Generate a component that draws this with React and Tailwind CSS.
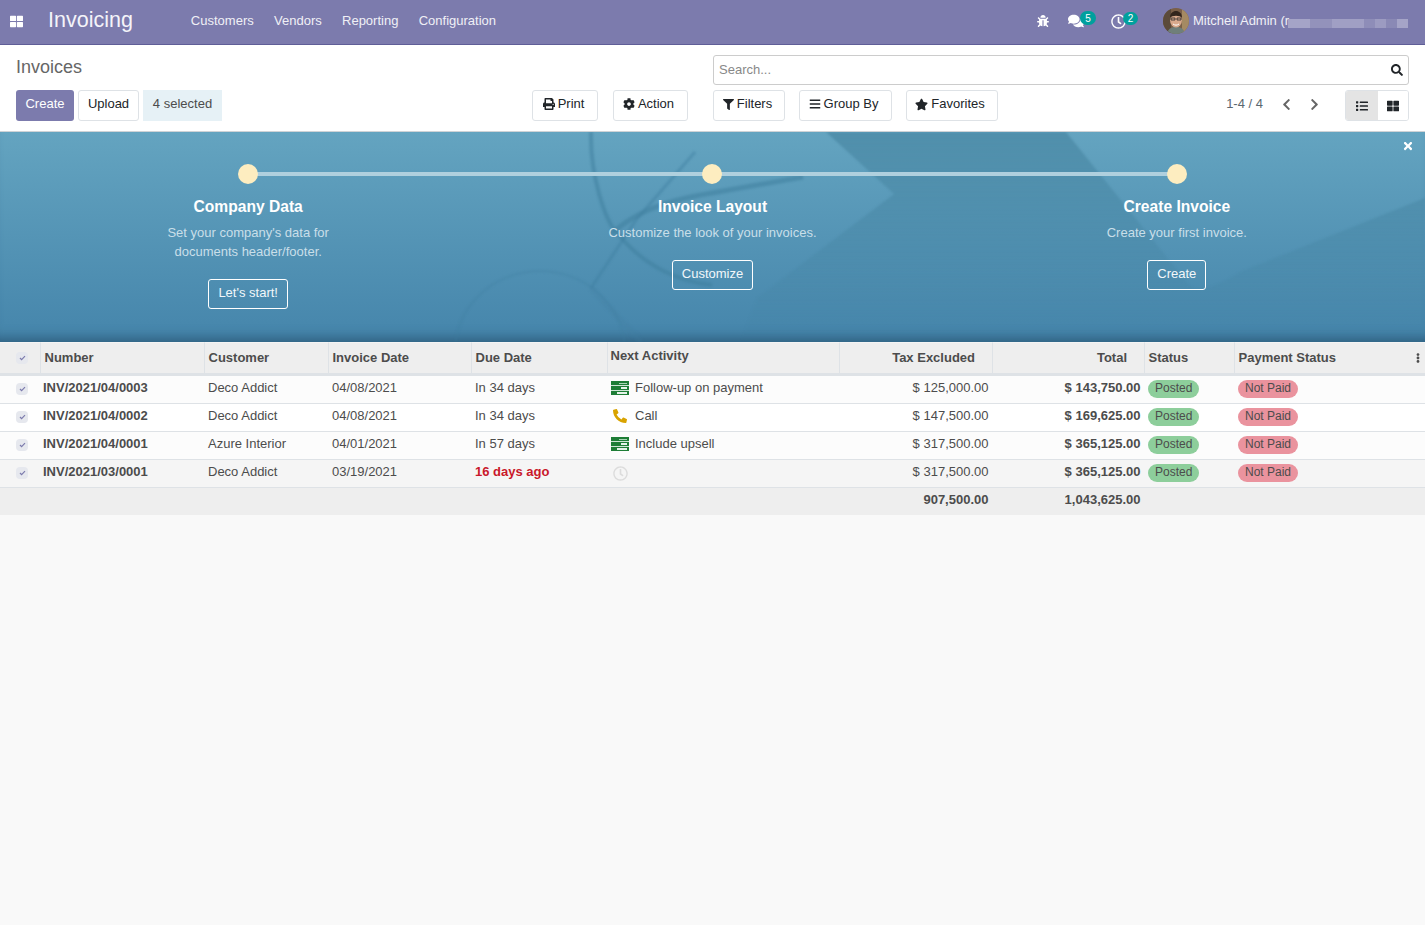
import {
  FaBars,
  FaBug,
  FaChevronLeft,
  FaChevronRight,
  FaCog,
  FaComments,
  FaEllipsisV,
  FaFilter,
  FaList,
  FaPhoneAlt,
  FaPrint,
  FaRegClock,
  FaSearch,
  FaStar,
  FaThLarge,
  FaTimes,
} from "react-icons/fa";

const invoices = [
  { number: "INV/2021/04/0003", customer: "Deco Addict", date: "04/08/2021", due: "In 34 days", activity: "Follow-up on payment", kind: "todo", tax: "$ 125,000.00", total: "$ 143,750.00", bg: "bg-[#fcfcfc]" },
  { number: "INV/2021/04/0002", customer: "Deco Addict", date: "04/08/2021", due: "In 34 days", activity: "Call", kind: "call", tax: "$ 147,500.00", total: "$ 169,625.00", bg: "bg-white" },
  { number: "INV/2021/04/0001", customer: "Azure Interior", date: "04/01/2021", due: "In 57 days", activity: "Include upsell", kind: "todo", tax: "$ 317,500.00", total: "$ 365,125.00", bg: "bg-[#fcfcfc]" },
  { number: "INV/2021/03/0001", customer: "Deco Addict", date: "03/19/2021", due: "16 days ago", late: true, activity: "", kind: "none", tax: "$ 317,500.00", total: "$ 365,125.00", bg: "bg-[#f5f5f5]" },
];

const steps = [
  { title: "Company Data", text: ["Set your company's data for", "documents header/footer."], button: "Let's start!" },
  { title: "Invoice Layout", text: ["Customize the look of your invoices."], button: "Customize" },
  { title: "Create Invoice", text: ["Create your first invoice."], button: "Create" },
];

const Check = () => (
  <span className="inline-flex items-center justify-center w-3 h-3 rounded-sm bg-[#e6e8ee] align-middle">
    <svg width="7" height="6" viewBox="0 0 7 6">
      <path d="M1 3l1.6 1.6L6 1.2" fill="none" stroke="#7c7bad" strokeWidth="1.2" />
    </svg>
  </span>
);

const TodoIcon = () => (
  <svg width="18" height="14" viewBox="0 0 18 14" className="shrink-0">
    <rect width="18" height="14" fill="#1e7d36" />
    <rect y="4" width="18" height="1" fill="#cfe6d6" />
    <rect y="9" width="18" height="1" fill="#cfe6d6" />
    <rect x="8" y="2" width="8" height="1" fill="#a9d4b5" />
    <rect x="10" y="6" width="6" height="2" fill="#e6f3ea" />
    <rect x="6" y="11" width="10" height="2" fill="#e6f3ea" />
  </svg>
);

const Avatar = () => (
  <svg width="26" height="26" viewBox="0 0 26 26" className="rounded-full">
    <rect width="26" height="26" fill="#7a5f48" />
    <rect x="0" width="8" height="26" fill="#5b4a3a" />
    <rect x="19" width="7" height="26" fill="#a58a63" />
    <path d="M4 26c1-6 5-7 9-7s8 1 9 7z" fill="#6f7f7a" />
    <ellipse cx="13" cy="12" rx="6" ry="7.5" fill="#d8a98c" />
    <path d="M7 10c0-5 3-7 6-7s6 2 6 7c-2-3-10-3-12 0z" fill="#33261d" />
    <path d="M8 10h4v2H8zM14 10h4v2h-4z" fill="none" stroke="#2a2a2a" strokeWidth="0.8" />
    <path d="M10 16c2 1.500 4 1.500 6 0" fill="none" stroke="#fff" strokeWidth="1" />
  </svg>
);

const Button = ({ children, className = "" }) => (
  <button className={`flex items-center h-[31px] pb-[3px] rounded-[3px] border border-[#dee2e6] bg-white text-[#212529] ${className}`}>
    {children}
  </button>
);

const Badge = ({ color, children }) => (
  <span className={`inline-flex items-center align-middle h-[18px] pb-[2px] px-[7px] rounded-full text-[12px] text-[#4c4c4c] ${color}`}>
    {children}
  </span>
);

const App = () => {
  return (
    <div className="min-h-screen bg-[#f9f9f9] text-[13px] text-[#4c4c4c] font-['Liberation_Sans',Arial,sans-serif]">
      {/* Top bar */}
      <nav className="flex items-center h-[45px] pb-[2px] bg-[#7c7bad] border-b border-[#5f5e97] text-white">
        <FaThLarge size={13} className="ml-[10px] text-white" />
        <span className="ml-[25px] text-[21.500px] leading-none text-[#f4f4f9]">Invoicing</span>
        <div className="flex ml-[58px] gap-[20.300px] text-[#f0f0f6]">
          <span>Customers</span>
          <span>Vendors</span>
          <span>Reporting</span>
          <span>Configuration</span>
        </div>
        <div className="flex items-center ml-auto pr-[17px]">
          <FaBug size={12} />
          <div className="flex items-center ml-[19px]">
            <FaComments size={16} />
            <span className="flex items-center justify-center w-[16px] h-[14px] -ml-[4px] -mt-[6px] rounded-full bg-[#00a09d] text-[10px]">5</span>
          </div>
          <div className="flex items-center ml-[15px]">
            <FaRegClock size={15} />
            <span className="flex items-center justify-center w-[15px] h-[13px] -ml-[3px] -mt-[6px] rounded-full bg-[#00a09d] text-[10px]">2</span>
          </div>
          <div className="ml-[25px] flex"><Avatar /></div>
          <span className="ml-[4px] w-[96px] whitespace-nowrap text-[#f0f0f6]">Mitchell Admin (r</span>
          <div className="flex h-[9px] w-[120px] mt-[4px] -ml-[1px]">
            <span className="w-[22px] bg-[#a5a4c7]" />
            <span className="w-[22px] bg-[#9392bb]" />
            <span className="w-[32px] bg-[#a09fc4]" />
            <span className="w-[11px] bg-[#8e8db8]" />
            <span className="w-[11px] bg-[#9c9bc1]" />
            <span className="w-[11px] bg-[#8a89b5]" />
            <span className="w-[11px] bg-[#a5a4c7]" />
          </div>
        </div>
      </nav>

      {/* Control panel */}
      <div className="grid grid-cols-2 h-[87px] bg-white border-b border-[#cfd3d6]">
        <div className="pl-4 pr-[25px] flex flex-col">
          <div className="h-[45px] pt-[9px] text-[18px] text-[#666666] leading-[26px]">Invoices</div>
          <div className="flex">
            <button className="h-[31px] w-[58px] pb-[3px] rounded-[3px] bg-[#7c7bad] text-white">Create</button>
            <Button className="ml-[4px] w-[61px] justify-center">Upload</Button>
            <span className="flex items-center ml-[4px] h-[31px] pb-[3px] w-[79px] justify-center bg-[#e6f1f6]">4 selected</span>
            <Button className="ml-auto w-[66px] pr-[2px] justify-center gap-[3px]"><FaPrint size={12} />Print</Button>
            <Button className="ml-[15px] w-[75px] pr-[3px] justify-center gap-[3px]"><FaCog size={12} />Action</Button>
          </div>
        </div>
        <div className="pl-[0.500px] pr-4 flex flex-col">
          <div className="flex items-center h-[30px] mt-[10px] px-[5px] border border-[#cccccc] rounded-[3px]">
            <span className="text-[#888888] text-[13px]">Search...</span>
            <FaSearch size={12} className="ml-auto text-[#212529]" />
          </div>
          <div className="flex mt-[5px]">
            <Button className="w-[72px] pr-[3px] justify-center gap-[3px]"><FaFilter size={11} />Filters</Button>
            <Button className="ml-[14px] w-[93px] pr-[4px] justify-center gap-[3px]"><FaBars size={12} />Group By</Button>
            <Button className="ml-[14px] w-[92px] pr-[4px] justify-center gap-[3px]"><FaStar size={13} />Favorites</Button>
            <span className="flex items-center h-[31px] pb-[3px] ml-auto text-[#5b6770]">1-4 / 4</span>
            <FaChevronLeft size={13} className="ml-[17px] mt-[8px] text-[#666666]" />
            <FaChevronRight size={13} className="ml-[15px] mt-[8px] text-[#666666]" />
            <div className="flex ml-[24px] h-[31px] border border-[#dee2e6] rounded-[3px] overflow-hidden">
              <span className="flex items-center justify-center w-[32px] bg-[#e4e4e4] text-[#212529]"><FaList size={12} /></span>
              <span className="flex items-center justify-center w-[30px] bg-white text-[#212529]"><FaThLarge size={12} /></span>
            </div>
          </div>
        </div>
      </div>

      {/* Onboarding banner */}
      <section className="relative h-[210px] px-4 overflow-hidden bg-gradient-to-b from-[#64a4c0] to-[#4585ab] shadow-[inset_0_-14px_12px_-10px_#2f5f7f]">
        <svg className="absolute inset-0 pointer-events-none blur-[1px]" width="1425" height="210" viewBox="0 0 1425 210">
          <defs>
            <linearGradient id="band" x1="0" y1="0" x2="0" y2="1">
              <stop offset="0" stopColor="#417f9b" stopOpacity="0.55" />
              <stop offset="1" stopColor="#417f9b" stopOpacity="0" />
            </linearGradient>
          </defs>
          <path d="M826 0L894 62L757 166L740 210H1425V66L1240 140Q1200 165 1189 153L1066 0z" fill="url(#band)" />
          <path d="M591 0C590 43 605 90 618 102C645 135 680 150 712 153" fill="none" stroke="#3f7f9f" strokeWidth="4" opacity="0.55" />
          <path d="M611 102C630 85 655 70 712 61L803 45" fill="none" stroke="#3f7f9f" strokeWidth="5" opacity="0.55" />
          <path d="M695 20L636 88L591 156" fill="none" stroke="#3f7f9f" strokeWidth="3" opacity="0.45" />
          <path d="M591 156L641 210" fill="none" stroke="#3f7f9f" strokeWidth="6" opacity="0.2" />
          <ellipse cx="540" cy="219" rx="85" ry="80" fill="none" stroke="#3f7f9f" strokeWidth="2" opacity="0.3" />
        </svg>
        <FaTimes size={12} className="absolute top-[8px] right-[11px] text-white" />
        <div className="relative flex">
          {steps.map((step, i) => (
            <div key={step.title} className="relative flex flex-col items-center w-1/3 pt-[32px] text-center">
              {i < 2 && <span className="absolute top-[40px] left-1/2 w-full h-[4px] bg-[#b0d0de]" />}
              <span className="relative w-[20px] h-[20px] rounded-full bg-[#fdedc0]" />
              <h3 className="mt-[11px] text-[15.600px] font-bold leading-[24px] text-white">{step.title}</h3>
              <div className="mt-[4px] mb-[18px] leading-[19px] text-[#c9dfe9]">
                {step.text.map((line) => (
                  <div key={line}>{line}</div>
                ))}
              </div>
              <button className="h-[30px] pb-[3px] px-[9px] rounded-[3px] border border-white text-[#f2f7fa]">{step.button}</button>
            </div>
          ))}
        </div>
      </section>

      {/* Invoices table */}
      <table className="w-full table-fixed border-separate border-spacing-0">
        <colgroup>
          <col className="w-[40px]" />
          <col className="w-[164px]" />
          <col className="w-[124px]" />
          <col className="w-[143px]" />
          <col className="w-[136px]" />
          <col className="w-[232px]" />
          <col className="w-[153px]" />
          <col className="w-[152px]" />
          <col className="w-[90px]" />
          <col />
        </colgroup>
        <thead>
          <tr className="h-[34px] bg-[#eeeeee] text-left font-bold [&>th]:border-b-[3px] [&>th]:border-b-[#dee2e6] [&>th]:border-t [&>th]:border-t-[#f4f4f4]">
            <th className="pl-1 pb-[1px] text-center"><Check /></th>
            <th className="pl-[3.500px] pb-[1px] border-l border-l-[#dee2e6]">Number</th>
            <th className="pl-[3.500px] pb-[1px] border-l border-l-[#dee2e6]">Customer</th>
            <th className="pl-[3.500px] pb-[1px] border-l border-l-[#dee2e6]">Invoice Date</th>
            <th className="pl-[3.500px] pb-[1px] border-l border-l-[#dee2e6]">Due Date</th>
            <th className="pl-[2.500px] pb-[5px] border-l border-l-[#dee2e6]">Next Activity</th>
            <th className="pr-[17px] pb-[1px] text-right border-l border-l-[#dee2e6]">Tax Excluded</th>
            <th className="pr-[17px] pb-[1px] text-right border-l border-l-[#dee2e6]">Total</th>
            <th className="pl-[3.500px] pb-[1px] border-l border-l-[#dee2e6]">Status</th>
            <th className="relative pl-[3.500px] pb-[1px] border-l border-l-[#dee2e6]">
              Payment Status
              <FaEllipsisV size={10} className="absolute top-[10px] right-[2px]" />
            </th>
          </tr>
        </thead>
        <tbody>
          {invoices.map((row) => (
            <tr key={row.number} className={`h-[28px] ${row.bg} [&>td]:border-b [&>td]:border-b-[#dee2e6]`}>
              <td className="pl-1 pb-[2px] text-center"><Check /></td>
              <td className="pl-[3px] pb-[3px] font-bold">{row.number}</td>
              <td className="pl-1 pb-[3px]">{row.customer}</td>
              <td className="pl-1 pb-[3px]">{row.date}</td>
              <td className={row.late ? "pl-1 pb-[3px] font-bold text-[#c9182b]" : "pl-1 pb-[3px]"}>{row.due}</td>
              <td className="pl-[4px] pb-[3px]">
                <div className="flex items-center gap-[6px]">
                  {row.kind === "todo" && <TodoIcon />}
                  {row.kind === "call" && (
                    <span className="flex w-[18px] justify-center"><FaPhoneAlt size={14} className="text-[#d9a300]" /></span>
                  )}
                  {row.kind === "none" && <FaRegClock size={15} className="ml-[2px] mt-[3px] text-[#dcdcdc]" />}
                  <span>{row.activity}</span>
                </div>
              </td>
              <td className="pr-[3.500px] pb-[3px] text-right">{row.tax}</td>
              <td className="pr-[3.500px] pb-[3px] text-right font-bold">{row.total}</td>
              <td className="pl-1 pb-[2px]"><Badge color="bg-[#8dce9b]">Posted</Badge></td>
              <td className="pl-1 pb-[2px]"><Badge color="bg-[#ea939e]">Not Paid</Badge></td>
            </tr>
          ))}
        </tbody>
        <tfoot>
          <tr className="h-[27px] bg-[#eeeeee] font-bold">
            <td colSpan={6} />
            <td className="pr-[3.500px] pb-[3px] text-right">907,500.00</td>
            <td className="pr-[3.500px] pb-[3px] text-right">1,043,625.00</td>
            <td colSpan={2} />
          </tr>
        </tfoot>
      </table>
    </div>
  );
};

export default App;
